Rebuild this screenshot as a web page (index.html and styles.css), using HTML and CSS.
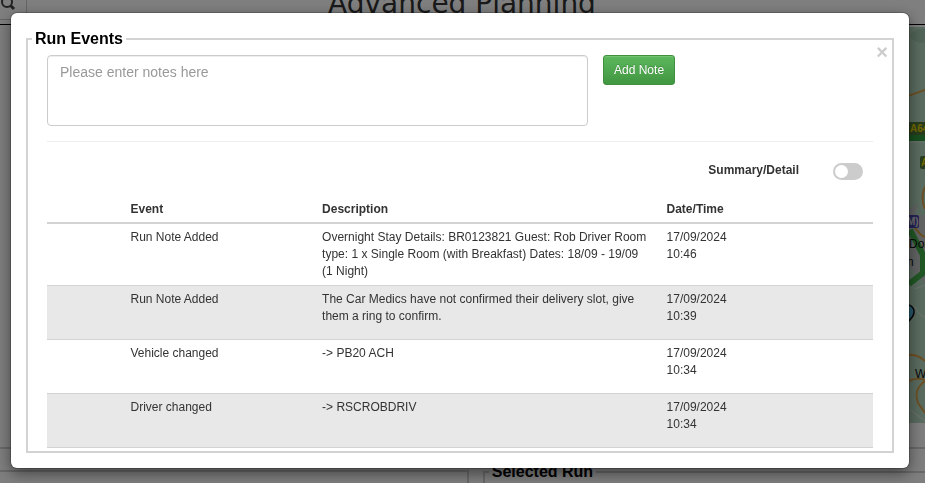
FILE: index.html
```html
<!DOCTYPE html>
<html lang="en">
<head>
  <meta charset="UTF-8">
  <meta name="viewport" content="width=device-width, initial-scale=1.0">
  <title>Advanced Planning</title>
  <link rel="stylesheet" href="styles.css">
</head>
<body>

  <!-- Page behind the dialog -->
  <div class="page">
    <div class="topbar">
      <button class="search-btn" type="button" aria-label="Search">
        <svg width="16" height="16" viewBox="0 0 16 16" fill="none" stroke="#444" stroke-width="2">
          <circle cx="6" cy="7" r="5"/>
          <path d="M9.500 10.500L13 14" stroke-width="3"/>
        </svg>
      </button>
      <h1>Advanced Planning</h1>
    </div>

    <div class="planner">
      <svg class="map" width="60" height="396" viewBox="0 0 60 396">
        <rect width="60" height="396" fill="#b5d8c0"/>
        <ellipse cx="58" cy="9" rx="12" ry="7" fill="#a3cbb0"/>
        <path d="M40 70L60 63" stroke="#d9a04a" stroke-width="2" fill="none"/>
        <rect x="40" y="95" width="30" height="13" fill="#4f7a3a"/>
        <text x="45" y="105" class="road">A64</text>
        <rect x="40" y="108" width="20" height="6" fill="#2f9e3f"/>
        <path d="M40 115H60" stroke="#d5e4d8" stroke-width="1"/>
        <rect x="55" y="129" width="14" height="13" rx="2" fill="#4f7a3a"/>
        <text x="56" y="139" class="road">A</text>
        <path d="M44 182L53 176L50 188H60V222L54 232L60 240V256L44 240Z" fill="#c3c9c6"/>
        <path d="M60 160Q55 170 60 182M50 201L56 208L60 210" stroke="#d9a04a" stroke-width="2" fill="none"/>
        <path d="M45 203L58 228V246L44 257" stroke="#42b04a" stroke-width="6" fill="none"/>
        <rect x="40" y="188" width="14" height="13" rx="2" fill="#4a49b0"/>
        <text x="42" y="198" class="motorway">M)</text>
        <text x="44" y="221" class="town">Don</text>
        <text x="42" y="239" class="town">n</text>
        <path d="M50 280Q55 290 60 290M50 262L60 258" stroke="#dfe7e1" fill="none"/>
        <path d="M41 296Q50 290 49 283A8 8 0 0 0 34 283Q33 290 41 296Z" fill="#4fb3dc" stroke="#111" stroke-width="1.500"/>
        <path d="M44 328Q52 327 60 334M44 354Q52 350 60 353M60 354Q48 362 53 376L60 386" stroke="#d9a04a" stroke-width="2" fill="none"/>
        <text x="50" y="351" class="town">Wo</text>
        <path d="M44 382L60 394" stroke="#dfe7e1" fill="none"/>
      </svg>
    </div>

    <div class="panels">
      <fieldset class="panel panel-left"></fieldset>
      <fieldset class="panel panel-right">
        <legend>Selected Run</legend>
      </fieldset>
    </div>
  </div>

  <!-- Run events dialog -->
  <div class="backdrop">
    <div class="modal" role="dialog" aria-label="Run Events">
      <fieldset class="events">
        <legend>Run Events</legend>
        <button class="close" type="button" aria-label="Close">&times;</button>

        <form class="note-form">
          <textarea class="note-text" placeholder="Please enter notes here" aria-label="Notes"></textarea>
          <button class="add-btn" type="button">Add Note</button>
        </form>

        <div class="toggle-row">
          <label for="detailToggle">Summary/Detail</label>
          <input class="toggle" type="checkbox" id="detailToggle">
        </div>

        <table class="events-table">
          <colgroup>
            <col class="col-icon">
            <col class="col-event">
            <col class="col-desc">
            <col class="col-date">
            <col>
          </colgroup>
          <thead>
            <tr>
              <th></th>
              <th>Event</th>
              <th>Description</th>
              <th>Date/Time</th>
              <th></th>
            </tr>
          </thead>
          <tbody>
            <tr>
              <td></td>
              <td>Run Note Added</td>
              <td>Overnight Stay Details: BR0123821 Guest: Rob Driver Room type: 1 x Single Room (with Breakfast) Dates: 18/09 - 19/09 (1&nbsp;Night)</td>
              <td>17/09/2024 10:46</td>
              <td></td>
            </tr>
            <tr>
              <td></td>
              <td>Run Note Added</td>
              <td>The Car Medics have not confirmed their delivery slot, give them a ring to confirm.</td>
              <td>17/09/2024 10:39</td>
              <td></td>
            </tr>
            <tr>
              <td></td>
              <td>Vehicle changed</td>
              <td>-&gt; PB20 ACH</td>
              <td>17/09/2024 10:34</td>
              <td></td>
            </tr>
            <tr>
              <td></td>
              <td>Driver changed</td>
              <td>-&gt; RSCROBDRIV</td>
              <td>17/09/2024 10:34</td>
              <td></td>
            </tr>
          </tbody>
        </table>
      </fieldset>
    </div>
  </div>

</body>
</html>
```
FILE: styles.css
```css
* {
  box-sizing: border-box;
}

body {
  margin: 0;
  font-family: "Liberation Sans", Arial, sans-serif;
  font-size: 12px;
  line-height: 17px;
  color: #333;
  background-color: #fff;
}

/* page behind */
.page {
  height: 100vh;
  overflow: hidden;
}

.topbar {
  display: flex;
  height: 25px;
  border-bottom: 1px solid #000;
}

.search-btn {
  display: flex;
  align-items: flex-end;
  width: 27px;
  height: 20px;
  padding: 0 0 8px 1px;
  border: solid #ccc;
  border-width: 0 1px 1px 0;
  background-color: #fff;
}

.topbar h1 {
  flex: 1;
  margin: 0 28px 0 0;
  font-family: "DejaVu Sans", Verdana, sans-serif;
  font-size: 28px;
  font-weight: normal;
  line-height: 8px;
  text-align: center;
  color: #333;
}

.planner {
  display: flex;
  justify-content: flex-end;
  height: 424px;
  padding-top: 2px;
  border-bottom: 2px solid #d3d3d3;
}

.road {
  font-size: 10px;
  font-weight: bold;
  fill: #e5d400;
}

.motorway {
  font-size: 10px;
  font-weight: bold;
  fill: #ddd;
}

.town {
  font-size: 12px;
  fill: #111;
}

.panels {
  display: grid;
  grid-template-columns: 106fr 100fr;
  column-gap: 14px;
  padding-top: 13px;
}

.panel {
  height: 80px;
  min-width: 0;
  margin: 0;
  padding: 0 4px;
  border: 2px solid #d3d3d3;
}

.panel-left {
  margin-top: 8px;
  border-left: 0;
}

.panel-right {
  border-right: 0;
}

legend {
  padding: 0 3px;
  font-size: 16px;
  font-weight: bold;
  line-height: 20px;
  color: #000;
}

/* dialog */
.backdrop {
  position: fixed;
  inset: 0;
  padding: 13px 16px 15px 11px;
  background-color: rgba(0, 0, 0, 0.5);
}

.modal {
  padding: 16px 15px 15px;
  border-radius: 6px;
  background-color: #fff;
  box-shadow: 0 0 0 1px rgba(0, 0, 0, 0.2), 0 5px 15px rgba(0, 0, 0, 0.5);
}

.events {
  position: relative;
  margin: 0;
  padding: 0 19px 3px;
  border: 2px solid #d3d3d3;
}

.events legend {
  margin-left: -15px;
}

.close {
  position: absolute;
  top: -7px;
  right: 4px;
  padding: 0;
  border: 0;
  background: none;
  font-family: inherit;
  font-size: 20px;
  font-weight: bold;
  line-height: 20px;
  color: #ccc;
  cursor: pointer;
}

.note-form {
  display: flex;
  align-items: flex-start;
  gap: 15px;
  margin-top: 6px;
  padding-bottom: 15px;
  border-bottom: 1px solid #eee;
}

.note-text {
  width: 65.5%;
  height: 71px;
  padding: 6px 12px;
  border: 1px solid #ccc;
  border-radius: 4px;
  box-shadow: inset 0 1px 1px rgba(0, 0, 0, 0.075);
  font-family: inherit;
  font-size: 14px;
  line-height: 20px;
  color: #555;
  resize: none;
}

.note-text::placeholder {
  color: #999;
}

.add-btn {
  height: 30px;
  padding: 0 10px;
  border: 1px solid #3e8f3e;
  border-radius: 3px;
  background: linear-gradient(#5cb85c, #419641);
  box-shadow: inset 0 1px 0 rgba(255, 255, 255, 0.15);
  font-family: inherit;
  font-size: 12px;
  color: #fff;
  text-shadow: 0 -1px 0 rgba(0, 0, 0, 0.2);
  cursor: pointer;
}

.add-btn:hover {
  background: #419641;
}

.toggle-row {
  display: flex;
  justify-content: flex-end;
  gap: 34px;
  padding: 20px 10px 15px 0;
}

.toggle-row label {
  font-weight: bold;
}

.toggle {
  appearance: none;
  width: 30px;
  height: 17px;
  margin: 1px 0 0;
  padding: 2px;
  border-radius: 9px;
  background-color: #ccc;
  cursor: pointer;
}

.toggle::before {
  content: "";
  display: block;
  width: 13px;
  height: 13px;
  border-radius: 50%;
  background-color: #fff;
}

.toggle:checked {
  background-color: #5cb85c;
}

.toggle:checked::before {
  margin-left: auto;
}

.events-table {
  width: 100%;
  table-layout: fixed;
  border-collapse: separate;
  border-spacing: 0;
}

.col-icon {
  width: 9.5%;
}

.col-event {
  width: 23.2%;
}

.col-desc {
  width: 41.7%;
}

.col-date {
  width: 10.5%;
}

.events-table th,
.events-table td {
  padding: 5px;
  text-align: left;
  vertical-align: top;
}

.events-table th {
  padding: 6px 5px 4px;
  border-bottom: 2px solid #d3d3d3;
}

.events-table td {
  height: 54px;
  border-bottom: 1px solid #d3d3d3;
}

.events-table tbody tr:nth-child(even) {
  background-color: #e8e8e8;
}
```
